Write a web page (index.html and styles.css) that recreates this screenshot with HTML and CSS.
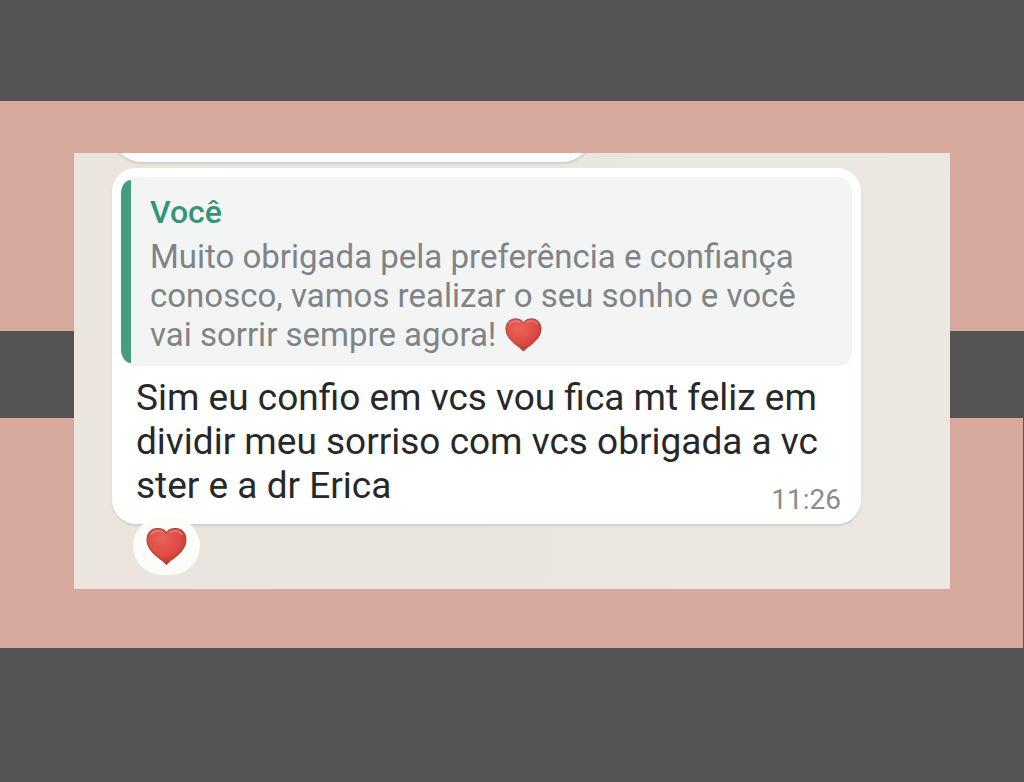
FILE: index.html
```html
<!DOCTYPE html>
<html lang="pt-BR">
<head>
    <meta charset="UTF-8">
    <meta name="viewport" content="width=device-width, initial-scale=1.0">
    <title>Depoimento</title>
    <link rel="stylesheet" href="styles.css">
</head>
<body>
    <svg class="defs" width="0" height="0" aria-hidden="true">
        <defs>
            <radialGradient id="heartFill" cx="0.4" cy="0.3" r="0.75">
                <stop offset="0" stop-color="#ea6259"/>
                <stop offset="0.6" stop-color="#de4b45"/>
                <stop offset="1" stop-color="#b9322f"/>
            </radialGradient>
            <symbol id="heart" viewBox="0 0 40 36">
                <path d="M20 35.500 C17 31 1 24 1 11.500 C1 5 5.500 0.500 11 0.500 C15 0.500 18.500 2 20 4.500 C21.500 2 25 0.500 29 0.500 C34.500 0.500 39 5 39 11.500 C39 24 23 31 20 35.500 Z" fill="url(#heartFill)" stroke="#a14541" stroke-width="1"/>
                <path d="M5 6.500 C7 2.500 12.500 2 16 4 M24 4 C27.500 2 33 2.500 35 6.500" fill="none" stroke="#eda9a3" stroke-width="1.500" stroke-linecap="round" opacity="0.5"/>
            </symbol>
        </defs>
    </svg>

    <main class="frame">
        <section class="chat">
            <div class="bubble previous"></div>

            <article class="bubble message">
                <blockquote class="quote">
                    <div class="quote-body">
                        <h2 class="author">Você</h2>
                        <p class="quote-text">Muito obrigada pela preferência e confiança conosco, vamos realizar o seu sonho e você vai sorrir sempre agora! <svg class="heart" role="img" aria-label="coração"><use href="#heart"/></svg></p>
                    </div>
                </blockquote>
                <p class="text">Sim eu confio em vcs vou fica mt feliz em dividir meu sorriso com vcs obrigada a vc ster e a dr Erica <time class="time" datetime="11:26">11:26</time></p>
                <span class="reaction">
                    <svg class="heart large" role="img" aria-label="coração"><use href="#heart"/></svg>
                </span>
            </article>
        </section>
    </main>
</body>
</html>
```
FILE: styles.css
```css
* {
    box-sizing: border-box;
}

body {
    margin: 0;
    padding: 101px 0;
    background-color: #545454;
    font-family: Roboto, "Liberation Sans", sans-serif;
}

.defs {
    position: absolute;
}

/* pink band with the dark stripe crossing behind the chat */
.frame {
    padding: 52px 74px 59px;
    background:
        linear-gradient(#d7a99d, #d7a99d) 0 0 / 100% 230px no-repeat,
        linear-gradient(transparent 317px, #d7a99d 317px) 0 0 / calc(100% - 1px) 100% no-repeat;
}

.chat {
    padding: 0 89px 14px 38px;
    overflow: hidden;
    background: linear-gradient(100deg, #ece5de, #e9e5df 30%, #ebe6df 60%, #ece7e1);
}

.bubble {
    border-radius: 24px;
    background-color: #fff;
    box-shadow: 0 2px 2px rgba(0, 0, 0, 0.1);
}

.previous {
    width: 480px;
    height: 60px;
    margin-top: -51px;
    margin-bottom: 6px;
    border-radius: 30px;
}

.message {
    position: relative;
    padding: 9px 9px 8px;
    margin-bottom: 51px;
}

.quote {
    display: flex;
    margin: 0;
    border-radius: 14px;
    background-color: #f3f5f5;
}

.quote::before {
    content: "";
    width: 10px;
    margin: 3px 0;
    border-radius: 10px 0 0 10px / 14px 0 0 14px;
    background-color: #469c80;
}

.quote-body {
    flex: 1;
    padding: 10px 24px 12px 19px;
}

.author {
    margin: 0;
    color: #359478;
    font-size: 32px;
    font-weight: 500;
    line-height: 50px;
}

.quote-text {
    margin: 0;
    color: #808485;
    font-size: 33px;
    line-height: 39px;
}

.heart {
    width: 37px;
    height: 34px;
    vertical-align: -6px;
}

.large {
    width: 41px;
    height: 37px;
}

.text {
    display: flow-root;
    margin: 10px 11px 0 15px;
    color: #262829;
    font-size: 37px;
    line-height: 44px;
}

.time {
    float: right;
    margin-top: 20px;
    color: #8b8b8b;
    font-size: 28px;
    line-height: 32px;
}

/* reaction badge hangs over the bottom edge of the bubble */
.reaction {
    position: absolute;
    left: 21px;
    bottom: -51px;
    display: flex;
    align-items: center;
    justify-content: center;
    width: 67px;
    height: 58px;
    border-radius: 30px;
    background-color: #fdfcf9;
}
```
